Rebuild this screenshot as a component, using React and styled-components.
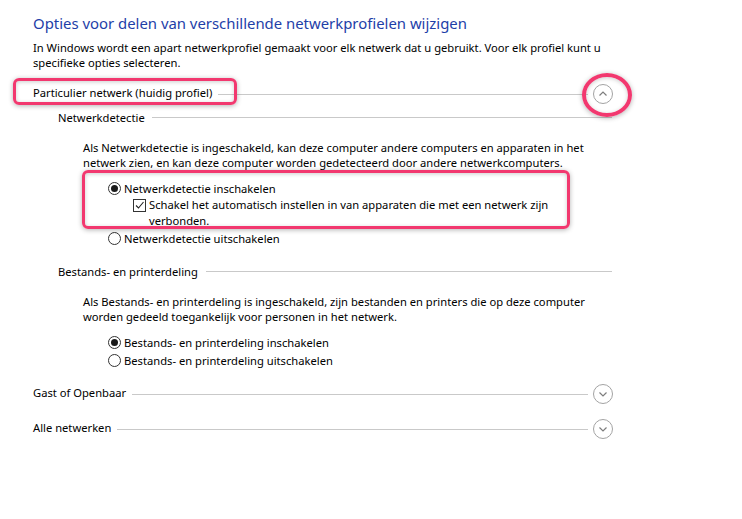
import styled, { createGlobalStyle } from "styled-components";

const GlobalStyle = createGlobalStyle`
  body {
    margin: 0;
    background: #fff;
  }
`;

const Page = styled.div`
  width: 742px;
  height: 519px;
  box-sizing: border-box;
  padding: 12px 0 0 33px;
  background: #fff;
  color: #000;
  font-family: "Segoe UI", "Noto Sans", sans-serif;
  font-size: 11.2px;
  overflow: hidden;
`;

const Title = styled.h1`
  margin: 0;
  font-size: 14.9px;
  font-weight: 400;
  line-height: 22px;
  color: #1e40a8;
  white-space: nowrap;
`;

const Text = styled.p`
  margin: ${(p) => p.$top || 0}px 0 0 ${(p) => p.$indent || 0}px;
  line-height: 15px;
  white-space: nowrap;
`;

const Section = styled.div`
  width: 580px;
  margin-top: ${(p) => p.$top}px;
`;

const HeaderRow = styled.div`
  display: flex;
  align-items: center;
  height: 20px;
`;

const SubRow = styled.div`
  display: flex;
  align-items: center;
  height: 20px;
  margin: ${(p) => p.$top}px 0 0 25px;
  width: 554px;
`;

const Label = styled.span`
  white-space: nowrap;
`;

const HeaderLabel = styled(Label)`
  position: relative;
  padding-bottom: 3px;

  &::after {
    content: "";
    display: ${(p) => (p.$marked ? "block" : "none")};
    position: absolute;
    top: -7px;
    bottom: -2px;
    left: -20px;
    right: -25px;
    border: 3px solid #f2386f;
    border-radius: 6px;
    box-shadow: 0 1px 5px rgba(0, 0, 0, 0.3), inset 0 1px 4px rgba(0, 0, 0, 0.2);
    pointer-events: none;
  }
`;

const Rule = styled.div`
  flex: 1;
  height: 1px;
  margin-left: ${(p) => p.$gap || 6}px;
  background: #c9c9c9;
`;

const Toggle = styled.div`
  position: relative;
  width: 20px;
  height: 20px;
  margin-left: 5px;
  flex: none;

  svg {
    display: block;
  }

  &::after {
    content: "";
    display: ${(p) => (p.$marked ? "block" : "none")};
    position: absolute;
    left: -11px;
    top: -11px;
    width: 50px;
    height: 44px;
    box-sizing: border-box;
    border: 4px solid #f2386f;
    border-radius: 50%;
    box-shadow: 0 1px 5px rgba(0, 0, 0, 0.3), inset 0 1px 4px rgba(0, 0, 0, 0.2);
    pointer-events: none;
  }
`;

const Options = styled.div`
  margin: ${(p) => p.$top}px 0 0 75px;
`;

const MarkedGroup = styled.div`
  position: relative;

  &::after {
    content: "";
    position: absolute;
    top: -9px;
    bottom: 0;
    left: -26px;
    width: 488px;
    border: 3px solid #f2386f;
    border-radius: 6px;
    box-sizing: border-box;
    box-shadow: 0 1px 5px rgba(0, 0, 0, 0.3), inset 0 1px 4px rgba(0, 0, 0, 0.2);
    pointer-events: none;
  }
`;

const RadioRow = styled.div`
  display: flex;
  align-items: center;
  gap: 3px;
  height: 18px;
  white-space: nowrap;
`;

const Radio = styled.span`
  width: 13px;
  height: 13px;
  box-sizing: border-box;
  border: 1px solid #333;
  border-radius: 50%;
  display: flex;
  align-items: center;
  justify-content: center;
  flex: none;

  &::before {
    content: "";
    display: ${(p) => (p.$on ? "block" : "none")};
    width: 7px;
    height: 7px;
    border-radius: 50%;
    background: #1a1a1a;
  }
`;

const CheckRow = styled.div`
  display: flex;
  align-items: flex-start;
  gap: 3px;
  margin-left: 25px;
  line-height: 16px;
  white-space: nowrap;
`;

const Box = styled.span`
  width: 13px;
  height: 13px;
  margin-top: 2px;
  box-sizing: border-box;
  border: 1px solid #333;
  background: #fff;
  flex: none;

  svg {
    display: block;
  }
`;

const Chevron = ({ up }) => (
  <svg width="20" height="20" viewBox="0 0 20 20">
    <circle cx="10" cy="10" r="9.5" fill="#fff" stroke="#a3a3a3" />
    <path
      d={up ? "M6.5 11.5 L10 8 L13.5 11.5" : "M6.5 8.5 L10 12 L13.5 8.5"}
      fill="none"
      stroke="#7d7d7d"
      strokeWidth="1.2"
    />
  </svg>
);

const Check = () => (
  <svg width="11" height="11" viewBox="0 0 11 11">
    <path d="M2 5.5 L4.5 8 L9.5 2" fill="none" stroke="#222" strokeWidth="1.1" />
  </svg>
);

const Header = ({ children, up, marked }) => (
  <HeaderRow>
    <HeaderLabel $marked={marked}>{children}</HeaderLabel>
    <Rule />
    <Toggle $marked={marked}>
      <Chevron up={up} />
    </Toggle>
  </HeaderRow>
);

const App = () => {
  return (
    <Page>
      <GlobalStyle />
      <Title>Opties voor delen van verschillende netwerkprofielen wijzigen</Title>
      <Text $top={6}>
        In Windows wordt een apart netwerkprofiel gemaakt voor elk netwerk dat u gebruikt. Voor elk profiel kunt u
        <br />
        specifieke opties selecteren.
      </Text>

      <Section $top={14}>
        <Header up marked>
          Particulier netwerk (huidig profiel)
        </Header>

        <SubRow $top={3}>
          <Label>Netwerkdetectie</Label>
          <Rule $gap={7} />
        </SubRow>
        <Text $top={13} $indent={50}>
          Als Netwerkdetectie is ingeschakeld, kan deze computer andere computers en apparaten in het
          <br />
          netwerk zien, en kan deze computer worden gedetecteerd door andere netwerkcomputers.
        </Text>
        <Options $top={9}>
          <MarkedGroup>
            <RadioRow>
              <Radio $on />
              Netwerkdetectie inschakelen
            </RadioRow>
            <CheckRow>
              <Box>
                <Check />
              </Box>
              <span>
                Schakel het automatisch instellen in van apparaten die met een netwerk zijn
                <br />
                verbonden.
              </span>
            </CheckRow>
          </MarkedGroup>
          <RadioRow>
            <Radio />
            Netwerkdetectie uitschakelen
          </RadioRow>
        </Options>

        <SubRow $top={14}>
          <Label>Bestands- en printerdeling</Label>
          <Rule $gap={8} />
        </SubRow>
        <Text $top={13} $indent={50}>
          Als Bestands- en printerdeling is ingeschakeld, zijn bestanden en printers die op deze computer
          <br />
          worden gedeeld toegankelijk voor personen in het netwerk.
        </Text>
        <Options $top={9}>
          <RadioRow>
            <Radio $on />
            Bestands- en printerdeling inschakelen
          </RadioRow>
          <RadioRow>
            <Radio />
            Bestands- en printerdeling uitschakelen
          </RadioRow>
        </Options>
      </Section>

      <Section $top={15}>
        <Header>Gast of Openbaar</Header>
      </Section>

      <Section $top={15}>
        <Header>Alle netwerken</Header>
      </Section>
    </Page>
  );
};

export default App;
